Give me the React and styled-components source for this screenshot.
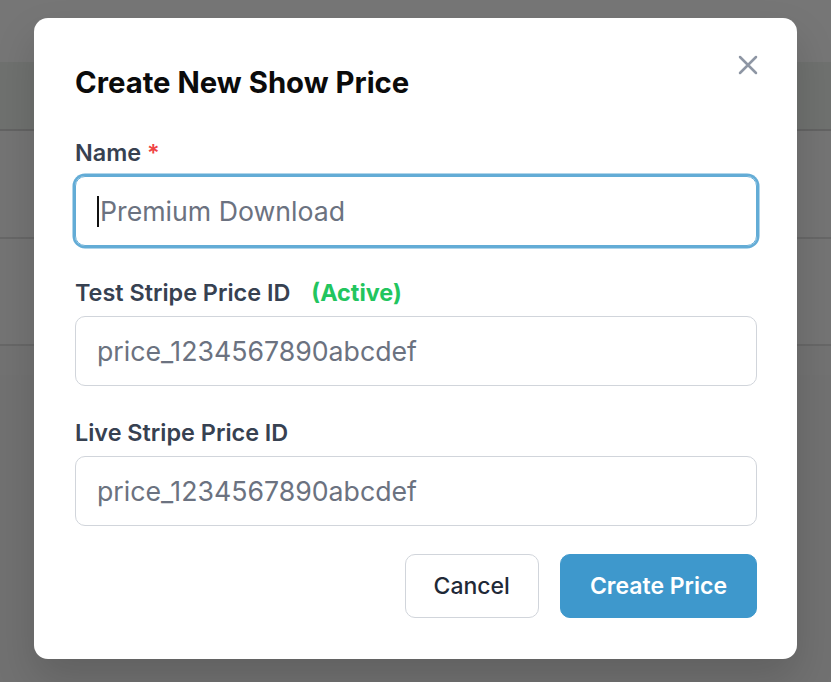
import React from "react";
import styled, { createGlobalStyle } from "styled-components";

const GlobalStyle = createGlobalStyle`
  * { box-sizing: border-box; }
  html, body { margin: 0; padding: 0; }
  body {
    font-family: Inter, "Noto Sans", sans-serif;
    background: #ffffff;
    width: 831px;
    height: 682px;
    overflow: hidden;
  }
`;

const Page = styled.div`
  position: relative;
  width: 831px;
  height: 682px;
  display: flex;
  flex-direction: column;
  background: #e2e2e2;
`;

const TopBar = styled.div`
  height: 62px;
  background: #ececec;
`;

const TableHead = styled.div`
  height: 69px;
  background: #dfe2df;
  border-bottom: 2px solid #c6c6c6;
`;

const TableRow = styled.div`
  height: ${(p) => p.$h}px;
  background: #e8e8e8;
  border-bottom: 2px solid #cfcfcf;
`;

const TableFoot = styled.div`
  height: 29px;
  background: #e4e4e4;
`;

const Overlay = styled.div`
  position: absolute;
  inset: 0;
  background: rgba(0, 0, 0, 0.5);
  display: flex;
  justify-content: center;
  align-items: flex-start;
  padding-top: 18px;
`;

const Modal = styled.div`
  position: relative;
  width: 763px;
  height: 641px;
  background: #ffffff;
  border-radius: 14px;
  padding: 47px 40px 41px 41px;
  display: flex;
  flex-direction: column;
  box-shadow: 0 20px 40px rgba(0, 0, 0, 0.15);
`;

const CloseButton = styled.button`
  position: absolute;
  top: 37px;
  right: 39px;
  width: 20px;
  height: 20px;
  padding: 0;
  border: none;
  background: none;
  color: #8e96a4;
  display: flex;
  align-items: center;
  justify-content: center;
  cursor: pointer;
`;

const Title = styled.h2`
  margin: 0 0 37px 0;
  font-size: 29.3px;
  line-height: 36px;
  font-weight: 700;
  color: #0b0b0b;
`;

const Field = styled.div`
  display: flex;
  flex-direction: column;
  margin-bottom: 32px;
`;

const Label = styled.label`
  display: flex;
  align-items: center;
  height: 28px;
  margin-bottom: 10px;
  font-size: 23.4px;
  font-weight: 600;
  color: #374151;
`;

const Required = styled.span`
  color: #ef4444;
  margin-left: 6px;
`;

const Status = styled.span`
  color: #22c55e;
  font-weight: 700;
  margin-left: 21px;
`;

const Input = styled.div`
  height: 70px;
  border: 1.5px solid ${(p) => (p.$focused ? "#63acd6" : "#d1d5db")};
  box-shadow: ${(p) => (p.$focused ? "0 0 0 2.5px #63acd6" : "none")};
  border-radius: 10px;
  display: flex;
  align-items: center;
  padding: 0 21px;
  font-size: 26.7px;
  color: #6b7280;
  position: relative;
`;

const Caret = styled.span`
  display: inline-block;
  width: 2px;
  height: 31px;
  background: #111;
  margin-right: 1px;
`;

const Actions = styled.div`
  margin-top: -4px;
  display: flex;
  justify-content: flex-end;
  gap: 21px;
`;

const Button = styled.button`
  height: 64px;
  padding: 0 ${(p) => (p.$primary ? 29 : 28)}px;
  border-radius: 10px;
  font-family: inherit;
  font-size: 23px;
  font-weight: ${(p) => (p.$primary ? 600 : 500)};
  border: 1.5px solid ${(p) => (p.$primary ? "#3e98cc" : "#d1d5db")};
  background: ${(p) => (p.$primary ? "#3e98cc" : "#ffffff")};
  color: ${(p) => (p.$primary ? "#ffffff" : "#1f2937")};
  cursor: pointer;
`;

export default function App() {
  return (
    <>
      <GlobalStyle />
      <Page>
        <TopBar />
        <TableHead />
        <TableRow $h={108} />
        <TableRow $h={107} />
        <TableFoot />
        <Overlay>
          <Modal>
            <CloseButton aria-label="Close">
              <svg width="20" height="20" viewBox="0 0 20 20" fill="none" stroke="currentColor" strokeWidth="2.5" strokeLinecap="round">
                <path d="M2 2L18 18M18 2L2 18" />
              </svg>
            </CloseButton>
            <Title>Create New Show Price</Title>
            <Field>
              <Label>
                Name<Required>*</Required>
              </Label>
              <Input $focused>
                <Caret />
                Premium Download
              </Input>
            </Field>
            <Field>
              <Label>
                Test Stripe Price ID<Status>(Active)</Status>
              </Label>
              <Input>price_1234567890abcdef</Input>
            </Field>
            <Field>
              <Label>Live Stripe Price ID</Label>
              <Input>price_1234567890abcdef</Input>
            </Field>
            <Actions>
              <Button>Cancel</Button>
              <Button $primary>Create Price</Button>
            </Actions>
          </Modal>
        </Overlay>
      </Page>
    </>
  );
}
